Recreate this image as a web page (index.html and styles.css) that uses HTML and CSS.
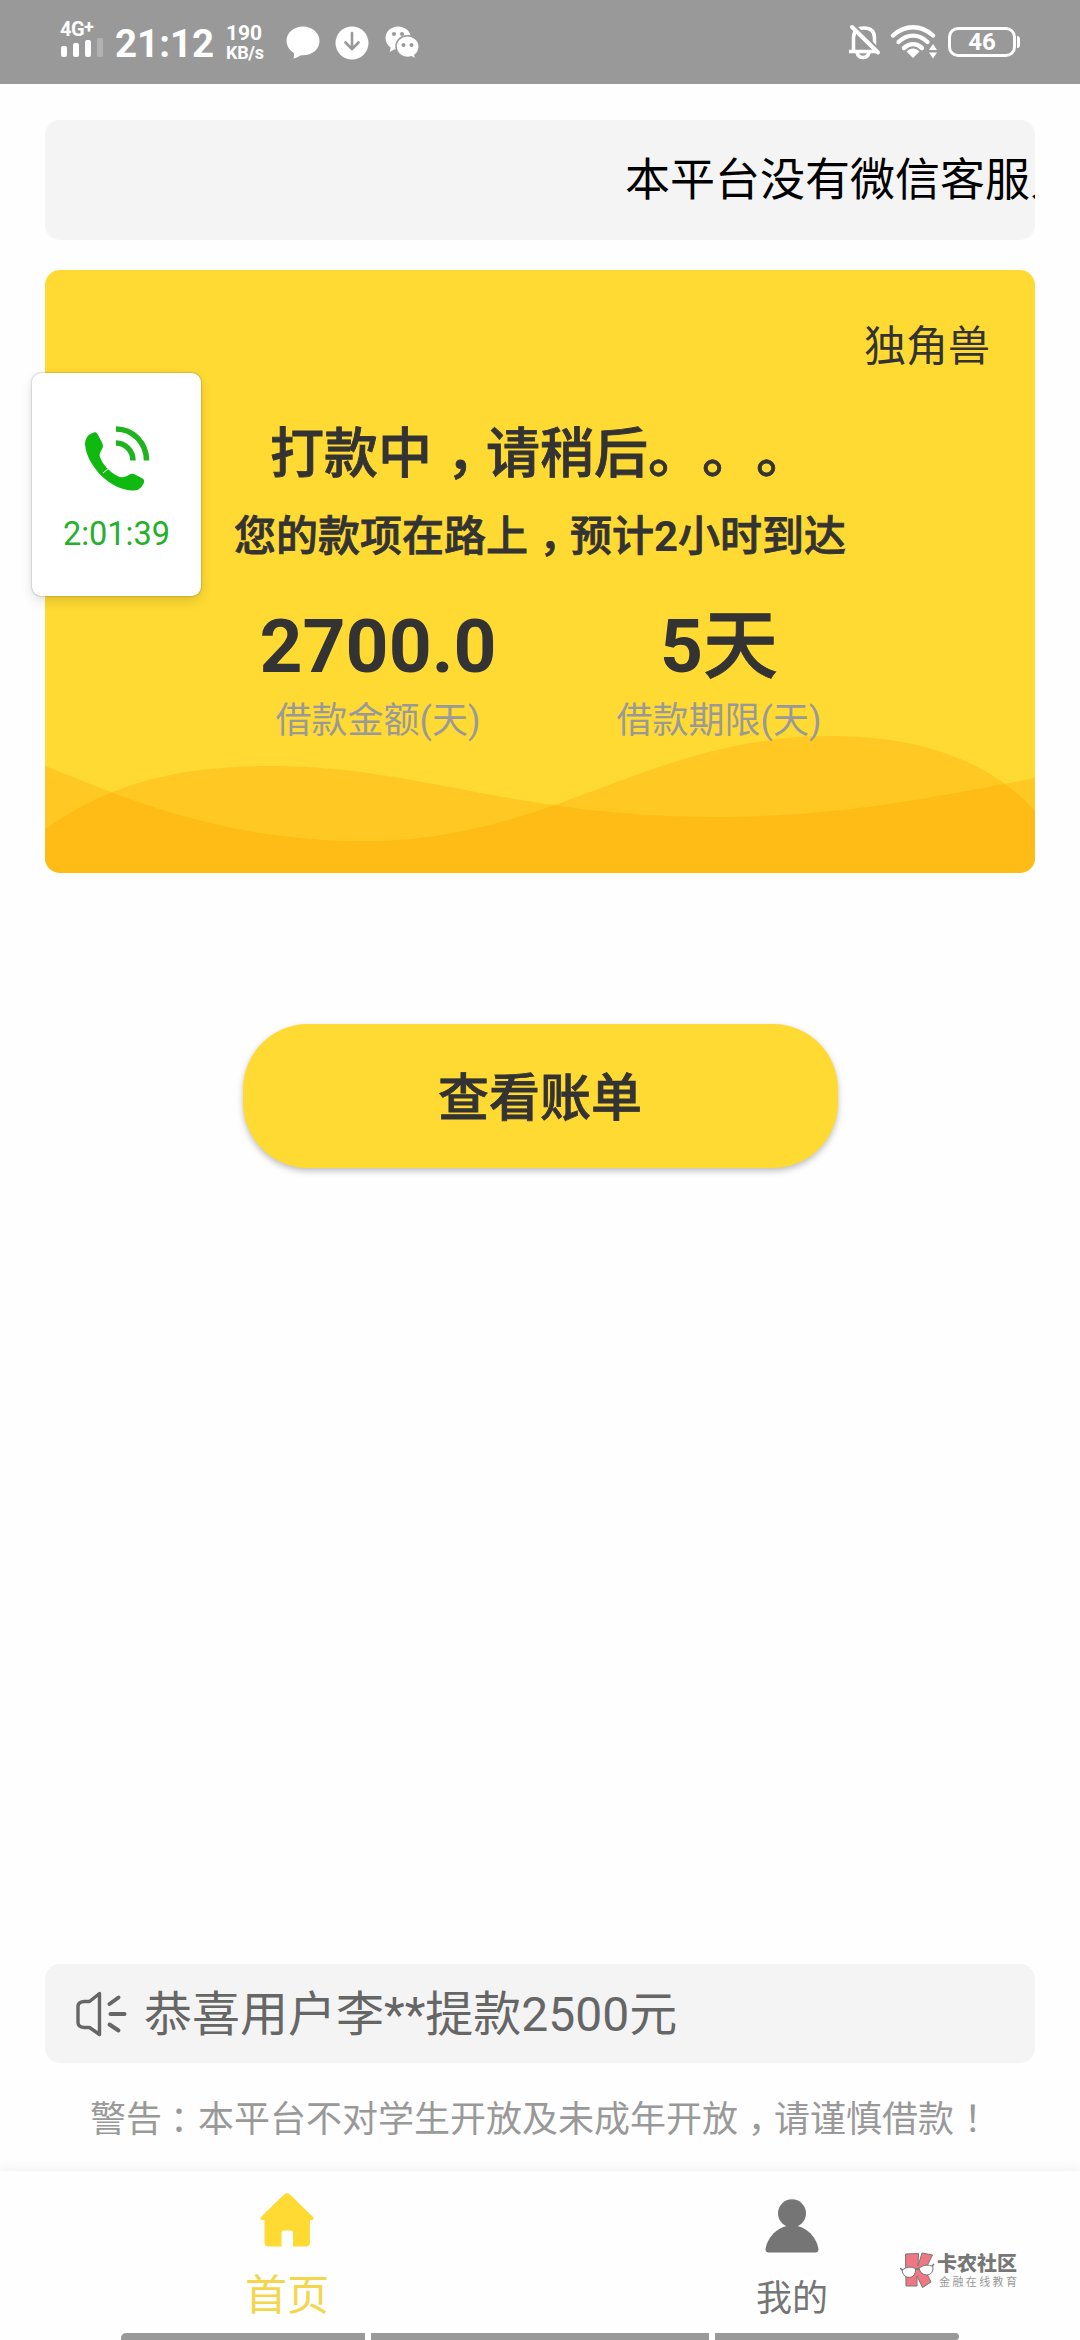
FILE: index.html
```html
<!DOCTYPE html>
<html lang="zh-CN">
<head>
<meta charset="utf-8">
<title>首页</title>
<link rel="stylesheet" href="styles.css">
</head>
<body>
<div class="screen">
  <header class="status">
    <div class="network">
      <div class="net-type">4G<span class="plus">+</span></div>
      <svg class="bars" width="43" height="20" viewBox="0 0 43 20"><g fill="#fff"><rect x="1" y="8" width="6" height="11" rx="2"/><rect x="13" y="5" width="6" height="14" rx="2"/><rect x="25" y="2" width="6" height="17" rx="2"/><rect x="37" y="0" width="6" height="19" rx="2" opacity=".25"/></g></svg>
    </div>
    <div class="clock">21:12</div>
    <div class="speed"><span class="rate">190</span><span class="unit">KB/s</span></div>
    <svg class="bubble" width="34" height="34" viewBox="0 0 34 34"><path fill="#fff" d="M17 .5C7.500.5.5 7 .5 14.800c0 5 2.800 9.400 7.300 12.200.6 2-.1 3.800-.3 5.500 2.800-.3 5-2 7.500-3.300C25.800 30 33.500 23.500 33.500 15 33.500 7 26.500.5 17 .5z"/></svg>
    <svg class="download" width="34" height="34" viewBox="0 0 34 34"><circle cx="17" cy="17" r="16.500" fill="#fff"/><path d="M17 7v15.500M10.500 16.500l6.500 6.500 6.500-6.500" fill="none" stroke="#999" stroke-width="2.600" stroke-linecap="round" stroke-linejoin="round"/></svg>
    <svg class="wechat" width="35" height="34" viewBox="0 0 35 34"><path fill="#fff" d="M13 .5C6 .5.5 5.600.5 12c0 4 2 7.300 5.200 9.500l-1 4.500 5-2.700c1.200.3 2.500.4 3.800.4C20.500 23.500 26 18.500 26 12 26 5.500 20 .5 13 .5z"/><path fill="#fff" stroke="#999" stroke-width="1.500" d="M22.500 9.800c-6.400 0-11.500 4.700-11.500 10.700s5 10.900 11.500 10.900c1.400 0 2.800-.2 4-.6l4.200 2.500-.8-4.100c2.600-2 4.300-5.200 4.300-8.700 0-6-5.300-10.700-11.700-10.700z"/><g fill="#999"><circle cx="9" cy="8" r="2"/><circle cx="17" cy="8" r="2"/><circle cx="18.500" cy="19" r="2"/><circle cx="26.500" cy="19" r="2"/></g></svg>
    <div class="spacer"></div>
    <svg class="bell" width="33" height="36" viewBox="0 0 33 36"><g fill="none" stroke="#fff"><path stroke-width="3.500" d="M5.500 27V14C5.500 7 9.500 4 16 4s10.500 3 10.500 10v13M1 27.500h29"/><path stroke-width="3.500" d="M9 28.500c1 4 3 5 6 5s5-1 6-5"/><path stroke="#999" stroke-width="3" d="M6 1l26 26"/><path stroke-width="4" stroke-linecap="round" d="M4 3l26 25.500"/></g></svg>
    <svg class="wifi" width="48" height="36" viewBox="0 0 48 36"><g fill="none" stroke="#fff" stroke-width="4.400" stroke-linecap="round"><path d="M3 11.500C15 .5 31 .5 43 11.500"/><path d="M8.500 18c9-8.500 20-8.500 29 0"/><path d="M14 24c5.500-5 12.500-5 18 0"/></g><path fill="#fff" d="M16.500 27.500c4-4 9-4 13 0L23 34z"/><path fill="#fff" d="M39 26l4-6 4 6zM39 28.500l4 6 4-6z"/></svg>
    <div class="battery">46</div>
  </header>

  <main class="content">
    <div class="marquee"><span class="marquee-text">本平台没有微信客服人员</span></div>

    <section class="card">
      <svg class="waves" width="990" height="140" viewBox="0 0 990 140"><g fill="#ffa400" fill-opacity=".33"><path d="M0 33C70 60 170 108 318 108C510 108 600 3 788 3C890 3 955 38 990 78V140H0z"/><path d="M0 96C60 55 120 33 225 33C375 33 470 84 668 84C800 84 900 62 990 45V140H0z"/></g></svg>
      <div class="brand">独角兽</div>
      <h1 class="title">打款中<span class="mid">，</span>请稍后。。。</h1>
      <p class="subtitle">您的款项在路上<span class="mid">，</span>预计<b>2</b>小时到达</p>
      <div class="stats">
        <div class="stat"><div class="value"><b>2700.0</b></div><div class="label">借款金额(天)</div></div>
        <div class="stat"><div class="value"><b>5</b>天</div><div class="label">借款期限(天)</div></div>
      </div>
      <aside class="call">
        <svg width="66" height="66" viewBox="0 0 66 66"><path fill="#0fb910" d="M10 6.500C4 8 1 12.500 1 18.500C3 40 26 64 49 64.500C55 65 58 61 60 56.500C60.500 54.500 60 53.500 58.500 52.500L51 48.500C49 47.500 47.500 47.500 45.500 48.500C41 51.500 37 52 33.500 50C25 45.500 19 39 16 31C15 28 16.500 26 18.500 22C19.300 20 19 18.500 18 16.500L13.500 8C12.500 6.500 11.500 6 10 6.500z"/><path stroke="#fff" stroke-width="1" d="M19 47l6-5"/><g fill="none" stroke="#1fb41f" stroke-width="5.500"><path d="M32 3C49 3 62.500 17 62.500 34.500"/><path d="M32 17C41.500 17 49 25 49 34.500"/></g></svg>
        <div class="call-time">2:01:39</div>
      </aside>
    </section>

    <button class="bill">查看账单</button>

    <div class="bottom">
      <div class="notice">
        <svg width="54" height="46" viewBox="0 0 54 46"><g fill="none" stroke="#666" stroke-width="3.400"><path stroke-linejoin="round" d="M24.500 2.500L14.500 10.500H9Q3 11 3 15.500V31.500Q3 36 9 36.500H14.500L24.500 43.500z"/><path stroke-width="4" stroke-linecap="round" d="M34.500 13l9-6.500M35.500 23h14M34.500 33.500l9 6"/></g></svg>
        <span class="notice-text">恭喜用户李**提款2500元</span>
      </div>
      <p class="warning">警告<span class="mid colon">：</span>本平台不对学生开放及未成年开放<span class="mid">，</span>请谨慎借款<span class="mid">！</span></p>
    </div>
  </main>

  <nav class="tabs">
    <a class="tab tab-home"><svg width="54" height="54" viewBox="0 0 54 54"><path fill="#ffda33" d="M24 1.500Q27-1 30 1.500L53 24Q54.500 26.500 52 27H50V49Q50 53.500 45.500 53.500H33V40Q33 37.500 30.500 37.500H24Q21.500 37.500 21.500 40V53.500H9Q4.500 53.500 4.500 49V27H2Q-.5 26.500 1 24z"/></svg><span>首页</span></a>
    <a class="tab tab-mine"><svg width="54" height="54" viewBox="0 0 54 54"><g fill="#757575"><circle cx="27" cy="14.300" r="14"/><path d="M.5 50C3 36.500 14 26.500 27 26.500S51 36.500 53.500 50Q53.500 53.500 50.500 53.500H3.500Q.5 53.500.5 50z"/></g></svg><span>我的</span></a>
    <div class="logo">
      <svg width="35" height="37" viewBox="0 0 35 37"><path fill="#ee7782" stroke="#777" stroke-width="1" d="M5.500 2L18.500 1.500L18 14L22 1L32.500 3L25 18L31 30L22.500 35.500L17 24V34H6z"/><g fill="#fff" stroke="#777" stroke-width="1"><path d="M2 18Q9 13 15.500 16.500Q16 25 9 25.500Q3 25 2 18z"/><path d="M19 16Q26 11 33 14.500Q33.500 22.500 27 23Q20.500 23 19 16z"/></g><path fill="none" stroke="#777" stroke-width="1.500" d="M0 16.500L3 18M15 17.500l4-1M32 14l2-2"/></svg>
      <div class="logo-words"><div class="logo-name">卡农社区</div><div class="logo-sub">金融在线教育</div></div>
    </div>
  </nav>
  <div class="gestures"><i></i><i></i><i></i></div>
</div>
</body>
</html>
```

FILE: styles.css
```css
* { box-sizing: border-box; margin: 0; padding: 0; }
body { width: 1080px; height: 2340px; overflow: hidden; background: #fefefe; font-family: Roboto, "Noto Sans CJK SC", sans-serif; color: #333; text-spacing-trim: space-all; }
svg { display: block; flex: none; }
.screen { height: 2340px; display: flex; flex-direction: column; position: relative; }
.mid { display: inline-block; width: 1em; text-indent: .27em; white-space: nowrap; }
.mid.colon { text-indent: .22em; }

.status { height: 84px; flex: none; background: #999; color: #fff; display: flex; align-items: flex-start; padding: 0 60px; font-weight: 700; }
.network { width: 55px; padding-top: 19px; }
.net-type { height: 19px; line-height: 21px; font-size: 20px; letter-spacing: -.5px; white-space: nowrap; }
.plus { position: relative; top: -3px; font-size: 18px; }
.clock { width: 111px; padding-top: 21px; line-height: 46px; font-size: 38.500px; }
.speed { width: 59px; padding-top: 23px; display: flex; flex-direction: column; white-space: nowrap; }
.rate { font-size: 21px; line-height: 20px; }
.unit { font-size: 18px; line-height: 19px; letter-spacing: -.3px; }
.bubble { margin: 26px 15px 0 1px; }
.download { margin: 26px 16px 0 0; }
.wechat { margin-top: 26px; }
.spacer { flex: 1; }
.bell { margin: 24px 9px 0 0; }
.wifi { margin: 24px 10px 0 0; }
.battery { width: 68px; height: 30px; margin: 27px 4px 0 0; border: 3px solid #fff; border-radius: 10px; font-size: 24px; line-height: 25px; text-align: center; position: relative; }
.battery::after { content: ""; position: absolute; right: -7px; top: 6px; width: 3px; height: 12px; background: #fff; border-radius: 0 3px 3px 0; }

.content { flex: 1; display: flex; flex-direction: column; padding: 36px 45px 0; }
.marquee { height: 120px; border-radius: 15px; background: #f4f4f4; overflow: hidden; padding-left: 580px; line-height: 122px; font-size: 45px; color: #000; white-space: nowrap; }
.card { height: 603px; margin-top: 30px; border-radius: 15px; background: #ffda33; position: relative; padding: 47px 45px 0; text-align: center; }
.card > * { position: relative; }
.card > .waves { position: absolute; left: 0; bottom: 0; border-radius: 0 0 15px 15px; }
.brand { text-align: right; font-size: 42px; line-height: 60px; }
.title, .subtitle, .value, .bill { font-weight: 500; -webkit-text-stroke: .8px currentColor; }
.title { margin-top: 38px; font-size: 54px; line-height: 80px; white-space: nowrap; }
.subtitle { margin-top: 12px; font-size: 42px; line-height: 60px; white-space: nowrap; }
.stats { margin-top: 34px; display: flex; justify-content: center; padding-left: 17px; }
.stat { width: 341px; }
.value { font-size: 75px; line-height: 90px; }
.value b, .subtitle b { font-weight: 700; -webkit-text-stroke: 0; }
.label { margin-top: 8px; font-size: 36px; line-height: 44px; color: #999; }
.card > .call { position: absolute; left: -13px; top: 103px; width: 169px; height: 223px; border-radius: 9px; background: #fff; box-shadow: 0 0 2px rgba(0,0,0,.4), 0 5px 12px rgba(0,0,0,.12); display: flex; flex-direction: column; align-items: center; padding-top: 53px; color: #25b02a; }
.call-time { margin-top: 22px; font-size: 32.500px; line-height: 40px; }

.bill { align-self: center; margin-top: 151px; width: 595px; height: 144px; flex: none; border: 0; border-radius: 65px; background: #ffda33; box-shadow: 0 3px 6px rgba(0,0,0,.25); font-family: inherit; font-size: 51px; line-height: 70px; padding-top: 5px; color: #333; }
.bottom { margin-top: auto; }
.notice { height: 99px; border-radius: 15px; background: #f4f4f4; display: flex; align-items: center; padding-left: 30px; gap: 15px; font-size: 48px; color: #666; }
.notice-text { line-height: 60px; padding-top: 3px; }
.warning { margin-top: 32px; height: 76px; line-height: 50px; font-size: 36px; text-align: center; color: #999; white-space: nowrap; }

.tabs { height: 169px; margin-bottom: -7px; flex: none; display: flex; position: relative; background: #fefefe; box-shadow: 0 0 14px rgba(0,0,0,.08); }
.tab { display: flex; flex-direction: column; align-items: center; }
.tab-home { width: 574px; padding-top: 22px; color: #f3d64c; font-size: 42px; line-height: 60px; }
.tab-home span { margin-top: 19px; }
.tab-mine { width: 436px; padding-top: 28px; color: #757575; font-size: 36px; line-height: 50px; }
.tab-mine span { margin-top: 21px; }
.logo { position: absolute; left: 900px; top: 81px; display: flex; gap: 2px; color: #777; font-family: "Noto Sans CJK SC", sans-serif; white-space: nowrap; }
.logo-name { font-size: 20px; line-height: 22px; font-weight: 900; }
.logo-sub { margin-top: 1px; padding-left: 2px; font-size: 11px; line-height: 13px; letter-spacing: 2.400px; color: #999; }
.gestures { position: relative; height: 7px; flex: none; display: flex; justify-content: center; gap: 6px; }
.gestures i { width: 244px; background: #999; }
.gestures i:nth-child(2) { width: 338px; }
.gestures i:first-child { border-top-left-radius: 5px; }
.gestures i:last-child { border-radius: 0 6px 6px 0; }
```
